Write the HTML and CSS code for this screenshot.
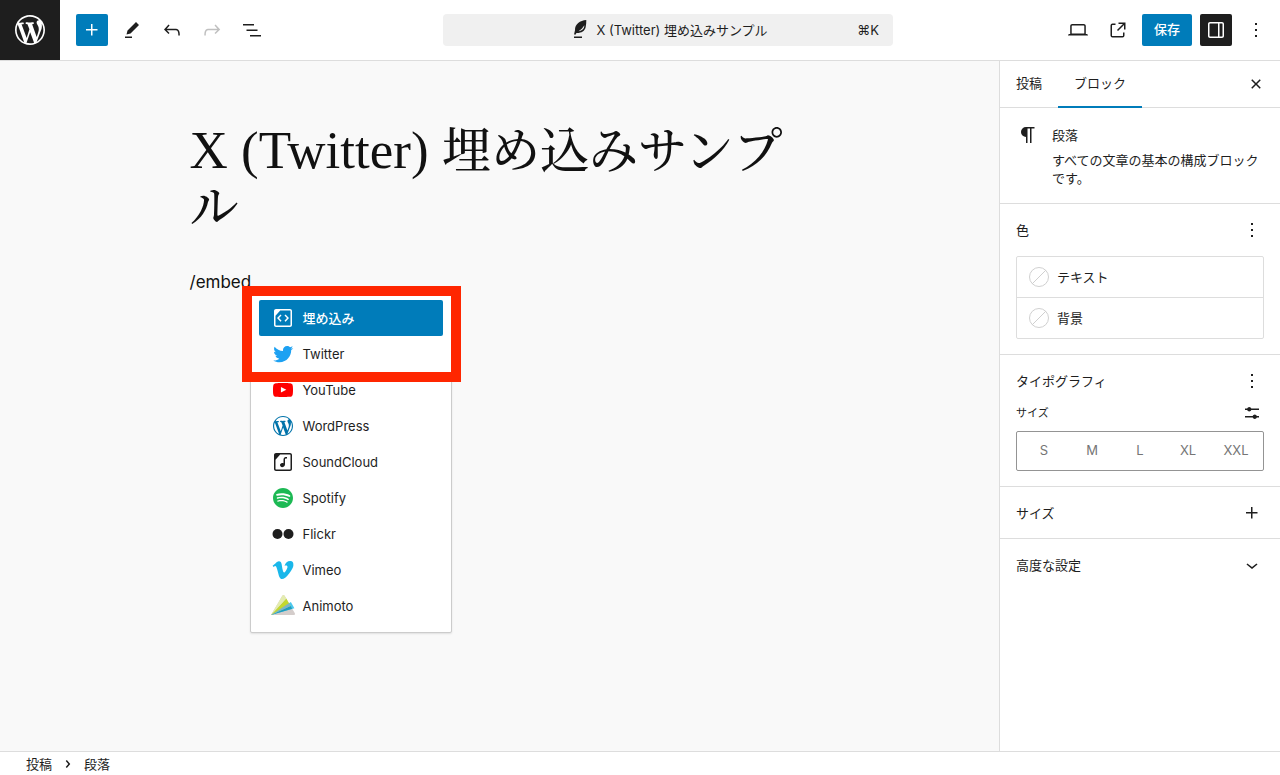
FILE: index.html
```html
<!DOCTYPE html>
<html lang="ja">
<head>
<meta charset="utf-8">
<title>X (Twitter) 埋め込みサンプル</title>
<link rel="stylesheet" href="styles.css">
</head>
<body>
<svg class="sprite" aria-hidden="true">
  <symbol id="wp" viewBox="-2 -2 24 24"><path d="M20 10c0-5.51-4.49-10-10-10C4.48 0 0 4.49 0 10c0 5.52 4.48 10 10 10 5.51 0 10-4.48 10-10zM7.78 15.37L4.37 6.22c.55-.02 1.17-.08 1.17-.08.5-.06.44-1.13-.06-1.11 0 0-1.45.11-2.37.11-.18 0-.37 0-.58-.01C4.12 2.69 6.87 1.11 10 1.11c2.33 0 4.45.87 6.05 2.34-.68-.11-1.65.39-1.65 1.58 0 .74.45 1.36.9 2.1.35.61.55 1.36.55 2.46 0 1.49-1.4 5-1.4 5l-3.03-8.37c.54-.02.82-.17.82-.17.5-.05.44-1.25-.06-1.22 0 0-1.44.12-2.38.12-.87 0-2.33-.12-2.33-.12-.5-.03-.56 1.2-.06 1.22l.92.08 1.26 3.41zM17.41 10c.24-.64.74-1.87.43-4.25.7 1.29 1.05 2.71 1.05 4.25 0 3.29-1.73 6.24-4.4 7.78.97-2.59 1.94-5.2 2.92-7.78zM6.1 18.09C3.12 16.65 1.11 13.53 1.11 10c0-1.3.23-2.48.72-3.59C3.25 10.3 4.67 14.2 6.1 18.09zm4.03-6.63l2.58 6.98c-.86.29-1.76.45-2.71.45-.79 0-1.57-.11-2.29-.33.81-2.38 1.62-4.74 2.42-7.1z"/></symbol>
  <symbol id="plus" viewBox="0 0 24 24"><path d="M11 12.5V17.5H12.5V12.5H17.5V11H12.5V6H11V11H6V12.5H11Z"/></symbol>
  <symbol id="more" viewBox="0 0 24 24"><path d="M13 19h-2v-2h2v2zm0-6h-2v-2h2v2zm0-6h-2V5h2v2z"/></symbol>
</svg>

<div class="editor">
  <header class="topbar">
    <a class="site-logo" href="#" aria-label="WordPress"><svg class="logo-mark"><use href="#wp"/></svg></a>
    <div class="tools">
      <button class="icon-btn primary" aria-label="ブロックを追加"><svg class="icon"><use href="#plus"/></svg></button>
      <button class="icon-btn" aria-label="編集"><svg class="icon" viewBox="0 0 24 24"><path d="m19 7-3-3-8.5 8.5-1 4 4-1L19 7Zm-7 11.5H5V20h7v-1.5Z"/></svg></button>
      <button class="icon-btn" aria-label="元に戻す"><svg class="icon" viewBox="0 0 24 24"><path d="M18.3 11.7c-.6-.6-1.4-.9-2.3-.9H6.7l2.9-3.3-1.1-1-4.5 5L8.5 16l1-1-2.7-2.7H16c.5 0 .9.2 1.3.5 1 1 1 3.4 1 4.5v.3h1.5v-.2c0-1.5 0-4.3-1.5-5.7z"/></svg></button>
      <button class="icon-btn disabled" aria-label="やり直す"><svg class="icon" viewBox="0 0 24 24"><path d="M15.6 6.5l-1.1 1 2.9 3.3H8c-.9 0-1.7.3-2.3.9-1.4 1.5-1.4 4.2-1.4 5.6v.2h1.5v-.3c0-1.1 0-3.5 1-4.5.3-.3.7-.5 1.3-.5h9.2L14.5 15l1.1 1.1 4.6-4.6-4.6-5z"/></svg></button>
      <button class="icon-btn" aria-label="リスト表示"><svg class="icon" viewBox="0 0 24 24"><path d="M3 6h11v1.5H3V6Zm3.500 5.500h11V13h-11v-1.500ZM21 17H10v1.500h11V17Z"/></svg></button>
    </div>
    <div class="doc-slot">
      <button class="doc-bar">
        <span class="doc-title"><svg class="icon" viewBox="0 0 24 24"><path fill-rule="evenodd" d="M18.300 2C12 2.500 6.800 6 7 12.300L6 16.500h1.800l.6-1.600c5 .2 8.400-1.900 9.300-6 .5-2.300.6-4.700.6-6.900zM16.300 7.200c.2 3.200-2 5.600-5.800 6 2.400-1.400 4.400-3.500 5.800-6z"/><path d="M6 18.500h8V20H6z"/></svg>X (Twitter) 埋め込みサンプル</span>
        <span class="shortcut">⌘K</span>
      </button>
    </div>
    <div class="actions">
      <button class="icon-btn" aria-label="表示"><svg class="icon" viewBox="0 0 24 24"><path d="M20.500 16h-.7V8c0-1.100-.9-2-2-2H6.200c-1.100 0-2 .9-2 2v8h-.7c-.8 0-1.500.7-1.500 1.500h20c0-.8-.7-1.500-1.500-1.500zM5.700 8c0-.3.2-.5.5-.5h11.600c.3 0 .5.2.5.5v7.600H5.700V8z"/></svg></button>
      <button class="icon-btn" aria-label="投稿を表示"><svg class="icon" viewBox="0 0 24 24"><path d="M19.500 4.500h-7V6h4.440l-5.970 5.970 1.060 1.060L18 7.060v4.440h1.500v-7Zm-13 1a2 2 0 0 0-2 2v10a2 2 0 0 0 2 2h10a2 2 0 0 0 2-2v-3H17v3a.5.5 0 0 1-.5.5h-10a.5.5 0 0 1-.5-.5v-10a.5.5 0 0 1 .5-.5h3V5.500h-3Z"/></svg></button>
      <button class="save">保存</button>
      <button class="icon-btn pressed" aria-label="設定"><svg class="icon" viewBox="0 0 24 24"><path d="M18 4H6c-1.100 0-2 .9-2 2v12c0 1.100.9 2 2 2h12c1.100 0 2-.9 2-2V6c0-1.100-.9-2-2-2zm-4 14.500H6c-.3 0-.5-.2-.5-.5V6c0-.3.2-.5.5-.5h8v13zm4.500-.5c0 .3-.2.5-.5.5h-2.500v-13H18c.3 0 .5.2.5.5v12z"/></svg></button>
      <button class="icon-btn" aria-label="オプション"><svg class="icon"><use href="#more"/></svg></button>
    </div>
  </header>

  <div class="body">
    <main class="canvas">
      <article class="post">
        <h1 class="post-title">X (Twitter) <span class="title-ja">埋め込みサンプル</span></h1>
        <div class="block">
          <p class="paragraph">/embed</p>
          <div class="completer" role="listbox" aria-label="ブロック">
            <button class="option selected" role="option"><svg class="icon" viewBox="0 0 24 24"><path d="M19 3H5c-1.100 0-2 .9-2 2v14c0 1.100.9 2 2 2h14c1.100 0 2-.9 2-2V5c0-1.100-.9-2-2-2zm.5 16c0 .3-.2.5-.5.5H5c-.3 0-.5-.2-.5-.5V9.800l4.700-5.300H19c.3 0 .5.2.5.5v14zm-6-9.500L16 12l-2.500 2.800 1.100 1L18 12l-3.500-3.500-1 1zm-3 0l-1-1L6 12l3.500 3.800 1.100-1L8 12l2.500-2.500z"/></svg>埋め込み</button>
            <button class="option" role="option"><svg class="icon twitter" viewBox="0 0 24 24"><path d="M22.230 5.924c-.736.326-1.527.547-2.357.646.847-.508 1.498-1.312 1.804-2.270-.793.470-1.670.812-2.606.996C18.325 4.498 17.258 4 16.078 4c-2.266 0-4.103 1.837-4.103 4.103 0 .322.036.635.106.935-3.410-.170-6.433-1.804-8.457-4.287-.353.607-.556 1.312-.556 2.064 0 1.424.724 2.680 1.825 3.415-.673-.022-1.305-.207-1.860-.514v.052c0 1.988 1.415 3.647 3.293 4.023-.344.095-.707.145-1.080.145-.265 0-.522-.026-.773-.074.522 1.630 2.038 2.817 3.833 2.850-1.404 1.100-3.174 1.757-5.096 1.757-.332 0-.660-.020-.980-.057 1.816 1.164 3.973 1.843 6.290 1.843 7.547 0 11.675-6.252 11.675-11.675 0-.178-.004-.355-.012-.530.802-.578 1.497-1.300 2.047-2.124z"/></svg>Twitter</button>
            <button class="option" role="option"><svg class="icon youtube" viewBox="0 0 24 24"><path d="M21.800 8s-.195-1.377-.795-1.984c-.760-.797-1.613-.8-2.004-.847-2.798-.203-6.996-.203-6.996-.203h-.010s-4.197 0-6.996.202c-.390.046-1.242.050-2.003.846C2.395 6.623 2.200 8 2.200 8S2 9.620 2 11.240v1.517c0 1.618.2 3.237.2 3.237s.195 1.378.795 1.985c.760.797 1.760.770 2.205.855 1.600.153 6.800.2 6.800.2s4.203-.005 7-.208c.392-.047 1.244-.050 2.005-.847.6-.607.795-1.985.795-1.985s.2-1.618.2-3.237v-1.517C22 9.620 21.800 8 21.800 8zM9.935 14.595v-5.620l5.403 2.820-5.403 2.800z"/></svg>YouTube</button>
            <button class="option" role="option"><svg class="icon wordpress"><use href="#wp"/></svg>WordPress</button>
            <button class="option" role="option"><svg class="icon" viewBox="0 0 24 24"><path d="M19 3H5c-1.100 0-2 .9-2 2v14c0 1.100.9 2 2 2h14c1.100 0 2-.9 2-2V5c0-1.100-.9-2-2-2zm.5 16c0 .3-.2.5-.5.5H5c-.3 0-.5-.2-.5-.5V9.800l4.700-5.300H19c.3 0 .5.2.5.5v14zM13.200 7.700c-.4.4-.7 1.100-.7 1.900v3.700c-.4-.3-.8-.4-1.300-.4-1.200 0-2.200 1-2.200 2.200 0 1.200 1 2.200 2.200 2.200.5 0 1-.2 1.400-.5.9-.6 1.400-1.600 1.400-2.600V9.600c0-.4.1-.6.2-.8.3-.3 1-.3 1.600-.3h.2V7h-.2c-.7 0-1.800 0-2.600.7z"/></svg>SoundCloud</button>
            <button class="option" role="option"><svg class="icon spotify" viewBox="0 0 24 24"><path d="M12 2C6.477 2 2 6.477 2 12s4.477 10 10 10 10-4.477 10-10S17.523 2 12 2m4.586 14.424c-.180.295-.563.387-.857.207-2.350-1.434-5.305-1.760-8.786-.963-.335.077-.670-.133-.746-.470-.077-.334.132-.670.470-.745 3.808-.870 7.076-.496 9.712 1.115.293.180.386.563.206.857M17.810 13.700c-.226.367-.706.482-1.072.257-2.687-1.652-6.785-2.130-9.965-1.166-.413.127-.848-.106-.973-.517-.125-.413.108-.848.520-.973 3.632-1.102 8.147-.568 11.234 1.328.366.226.480.707.256 1.072m.105-2.835C14.692 8.950 9.375 8.775 6.297 9.710c-.493.150-1.016-.130-1.166-.624-.148-.495.130-1.017.625-1.167 3.532-1.073 9.404-.866 13.115 1.337.445.264.590.838.327 1.282-.264.443-.838.590-1.282.325"/></svg>Spotify</button>
            <button class="option" role="option"><svg class="icon" viewBox="0 0 24 24"><circle cx="6.500" cy="12" r="5"/><circle cx="17.500" cy="12" r="5"/></svg>Flickr</button>
            <button class="option" role="option"><svg class="icon vimeo" viewBox="0 0 24 24"><path d="M22.396 7.164c-.093 2.026-1.507 4.800-4.245 8.320C15.323 19.160 12.930 21 10.970 21c-1.214 0-2.240-1.120-3.080-3.360-.560-2.052-1.118-4.105-1.680-6.158-.622-2.240-1.290-3.360-2.004-3.360-.156 0-.7.328-1.634.980l-.978-1.260c1.027-.903 2.040-1.806 3.037-2.710C6 3.950 7.030 3.328 7.716 3.265c1.620-.156 2.616.950 2.990 3.320.404 2.558.685 4.148.840 4.770.468 2.120.982 3.180 1.543 3.180.435 0 1.090-.687 1.963-2.064.872-1.376 1.340-2.422 1.402-3.142.125-1.187-.343-1.782-1.400-1.782-.5 0-1.013.115-1.542.340 1.023-3.350 2.977-4.976 5.862-4.883 2.140.063 3.148 1.450 3.024 4.160z"/></svg>Vimeo</button>
            <button class="option" role="option"><svg class="icon" viewBox="0 0 24 24"><path fill="#d4cdcb" d="M23.725 19.020 13.618 1.836c-.642-1.114-1.709-1.114-2.325 0L0 21h22.565c1.279 0 1.802-.890 1.160-1.980z"/><path fill="#4bc7ee" d="m0 21 19.837-13.078 3.583 6.208z"/><path fill="#c3d82e" d="m0 21 15.265-16.386 4.303 7.323z"/><path fill="#e4ecb0" d="M13.618 1.836c-.642-1.114-1.709-1.114-2.325 0L0 21 15.265 4.614z"/><path fill="#209dbd" d="m0 21 19.568-9.063 1.662 2.834z"/><path fill="#7cb3c9" d="m0 21 17.942-11.826 1.626 2.763z"/></svg>Animoto</button>
          </div>
          <div class="highlight"></div>
        </div>
      </article>
    </main>

    <aside class="sidebar">
      <div class="tabs">
        <button class="tab">投稿</button>
        <button class="tab active">ブロック</button>
        <button class="icon-btn close" aria-label="閉じる"><svg class="icon" viewBox="0 0 24 24"><path d="M12 13.060l3.712 3.713 1.061-1.060L13.061 12l3.712-3.712-1.060-1.060L12 10.938 8.288 7.227l-1.061 1.060L10.939 12l-3.712 3.712 1.060 1.061L12 13.061z"/></svg></button>
      </div>
      <section class="card">
        <svg class="icon" viewBox="0 0 24 24"><path d="M9.996 13H10V19h1.500V4.500H14V19h1.500V4.500h3V3H9.996a5 5 0 0 0 0 10z"/></svg>
        <div class="card-text">
          <h2 class="heading">段落</h2>
          <p class="description">すべての文章の基本の構成ブロックです。</p>
        </div>
      </section>
      <section class="panel">
        <div class="panel-head"><h2 class="heading">色</h2><button class="mini-btn" aria-label="色オプション"><svg class="icon"><use href="#more"/></svg></button></div>
        <div class="colors">
          <button class="color"><svg class="swatch" viewBox="0 0 20 20"><circle cx="10" cy="10" r="9.500"/><path d="M3 17 17 3"/></svg>テキスト</button>
          <button class="color"><svg class="swatch" viewBox="0 0 20 20"><circle cx="10" cy="10" r="9.500"/><path d="M3 17 17 3"/></svg>背景</button>
        </div>
      </section>
      <section class="panel">
        <div class="panel-head"><h2 class="heading">タイポグラフィ</h2><button class="mini-btn" aria-label="タイポグラフィオプション"><svg class="icon"><use href="#more"/></svg></button></div>
        <div class="size-head"><h3 class="label">サイズ</h3><button class="mini-btn" aria-label="カスタムサイズ"><svg class="icon" viewBox="0 0 24 24"><path d="M5 7.500h2.130a2.250 2.250 0 0 1 4.240 0H19V9h-7.630a2.250 2.250 0 0 1-4.240 0H5zM5 15h7.630a2.250 2.250 0 0 1 4.240 0H19v1.500h-2.130a2.250 2.250 0 0 1-4.240 0H5z"/></svg></button></div>
        <div class="sizes">
          <button class="size">S</button><button class="size">M</button><button class="size">L</button><button class="size">XL</button><button class="size">XXL</button>
        </div>
      </section>
      <section class="panel row">
        <h2 class="heading">サイズ</h2><button class="mini-btn" aria-label="サイズオプション"><svg class="icon"><use href="#plus"/></svg></button>
      </section>
      <section class="panel row last">
        <h2 class="heading">高度な設定</h2><button class="mini-btn" aria-label="開く"><svg class="icon" viewBox="0 0 24 24"><path d="M17.500 11.600L12 16l-5.500-4.400.9-1.200L12 14l4.500-3.600 1 1.200z"/></svg></button>
      </section>
    </aside>
  </div>

  <footer class="breadcrumb">
    <a class="crumb" href="#">投稿</a>
    <svg class="icon" viewBox="0 0 24 24"><path d="M10.862 8.040L14.280 12.029L10.862 16.017L9.723 15.040L12.305 12.029L9.723 9.017Z"/></svg>
    <span class="crumb">段落</span>
  </footer>
</div>
</body>
</html>
```
FILE: styles.css
```css
* { box-sizing: border-box; }

body {
  margin: 0;
  color: #1e1e1e;
  background: #fff;
  font: 13px/18px Inter, "Noto Sans CJK JP", sans-serif;
}

h1, h2, h3, p { margin: 0; font-weight: 400; }

button {
  border: 0;
  padding: 0;
  color: inherit;
  background: none;
  font: inherit;
}

a { color: inherit; text-decoration: none; }

.sprite { display: none; }

.icon { width: 24px; height: 24px; flex: none; fill: currentColor; }

.editor { display: flex; flex-direction: column; height: 100vh; }

/* Top bar */
.topbar {
  display: flex;
  flex: none;
  align-items: center;
  height: 61px;
  border-bottom: 1px solid #ddd;
}

.site-logo {
  display: flex;
  align-items: center;
  justify-content: center;
  width: 60px;
  height: 60px;
  color: #fff;
  background: #1e1e1e;
}

.logo-mark { width: 36px; height: 36px; fill: currentColor; }

.tools, .actions { display: flex; gap: 8px; }
.tools { margin: 0 6px 0 16px; }
.actions { margin-right: 8px; }

.icon-btn {
  display: flex;
  align-items: center;
  justify-content: center;
  width: 32px;
  height: 32px;
  border-radius: 2px;
}

.primary { color: #fff; background: #007cba; }
.pressed { color: #fff; background: #1e1e1e; }
.disabled { color: #c0c0c0; }

.save {
  padding: 0 12px 2px;
  border-radius: 2px;
  color: #fff;
  background: #007cba;
  font-weight: 500;
}

.doc-slot { display: flex; flex: 1; justify-content: center; }

.doc-bar {
  display: grid;
  grid-template-columns: 1fr auto 1fr;
  align-items: center;
  width: 450px;
  height: 32px;
  padding: 0 14px;
  border-radius: 4px;
  background: #f0f0f0;
}

.doc-title { display: flex; grid-column: 2; align-items: center; gap: 4px; }
.shortcut { justify-self: end; }

/* Body */
.body { display: flex; flex: 1; min-height: 0; }

.canvas {
  flex: 1;
  min-width: 0;
  padding: 62px 24px 0;
  background: #f9f9f9;
  color: #111;
}

.post { max-width: 620px; margin: 0 auto; }

.post-title {
  font: 53px/55px "Liberation Serif", "Noto Serif CJK JP", "Noto Sans CJK JP", serif;
}

.title-ja { font-size: 49px; font-weight: 500; }

.block { position: relative; margin-top: 34px; }
.paragraph { font-size: 17px; line-height: 26px; }

.completer {
  position: absolute;
  top: 22px;
  left: 60px;
  width: 202px;
  padding: 8px;
  border: 1px solid #ccc;
  border-radius: 2px;
  background: #fff;
  color: #1e1e1e;
  box-shadow: 0 1px 2px rgba(0, 0, 0, 0.1);
}

.option {
  display: flex;
  align-items: center;
  gap: 8px;
  width: 100%;
  height: 36px;
  padding: 0 12px;
  border-radius: 2px;
}

.selected { color: #fff; background: #007cba; font-weight: 500; }
.twitter { color: #1da1f2; }
.youtube { color: #f00; }
.wordpress { color: #0073aa; }
.spotify { color: #1db954; }
.vimeo { color: #1ab7ea; }

.highlight {
  position: absolute;
  top: 17px;
  left: 52px;
  width: 219px;
  height: 96px;
  border: 10px solid #ff2600;
}

/* Sidebar */
.sidebar { width: 281px; border-left: 1px solid #ddd; }

.tabs { display: flex; height: 47px; border-bottom: 1px solid #ddd; }

.tab { height: 47px; padding: 0 16px 2px; border-bottom: 2px solid transparent; }
.active { border-bottom-color: #007cba; }
.close { align-self: center; margin: 0 8px 0 auto; }

.card {
  display: flex;
  gap: 12px;
  padding: 16px;
  border-bottom: 1px solid #ddd;
}

.card-text { display: flex; flex-direction: column; gap: 7px; padding-top: 2px; }

.heading { font-size: 13px; line-height: 18px; }

.panel { padding: 14px 16px 15px; border-bottom: 1px solid #ddd; }

.panel-head { display: flex; align-items: center; justify-content: space-between; }

.mini-btn { display: flex; }

.colors { margin-top: 14px; border: 1px solid #ddd; border-radius: 2px; }

.color {
  display: flex;
  align-items: center;
  gap: 8px;
  width: 100%;
  height: 40px;
  padding: 0 12px;
}

.color + .color { height: 41px; border-top: 1px solid #ddd; }

.swatch { width: 20px; height: 20px; fill: none; stroke: #d0d0d0; }

.size-head { display: flex; align-items: center; justify-content: space-between; margin: 8px 0 6px; }

.label { font-size: 11px; }

.sizes {
  display: flex;
  height: 40px;
  padding: 0 3px;
  border: 1px solid #949494;
  border-radius: 2px;
  color: #757575;
}

.size { flex: 1; padding-bottom: 2px; }

.row { display: flex; align-items: center; justify-content: space-between; padding: 14px 16px 13px; }
.last { border-bottom: 0; }

/* Footer */
.breadcrumb {
  display: flex;
  flex: none;
  align-items: center;
  height: 24px;
  padding: 0 26px;
  gap: 4px;
  border-top: 1px solid #ddd;
}
```
